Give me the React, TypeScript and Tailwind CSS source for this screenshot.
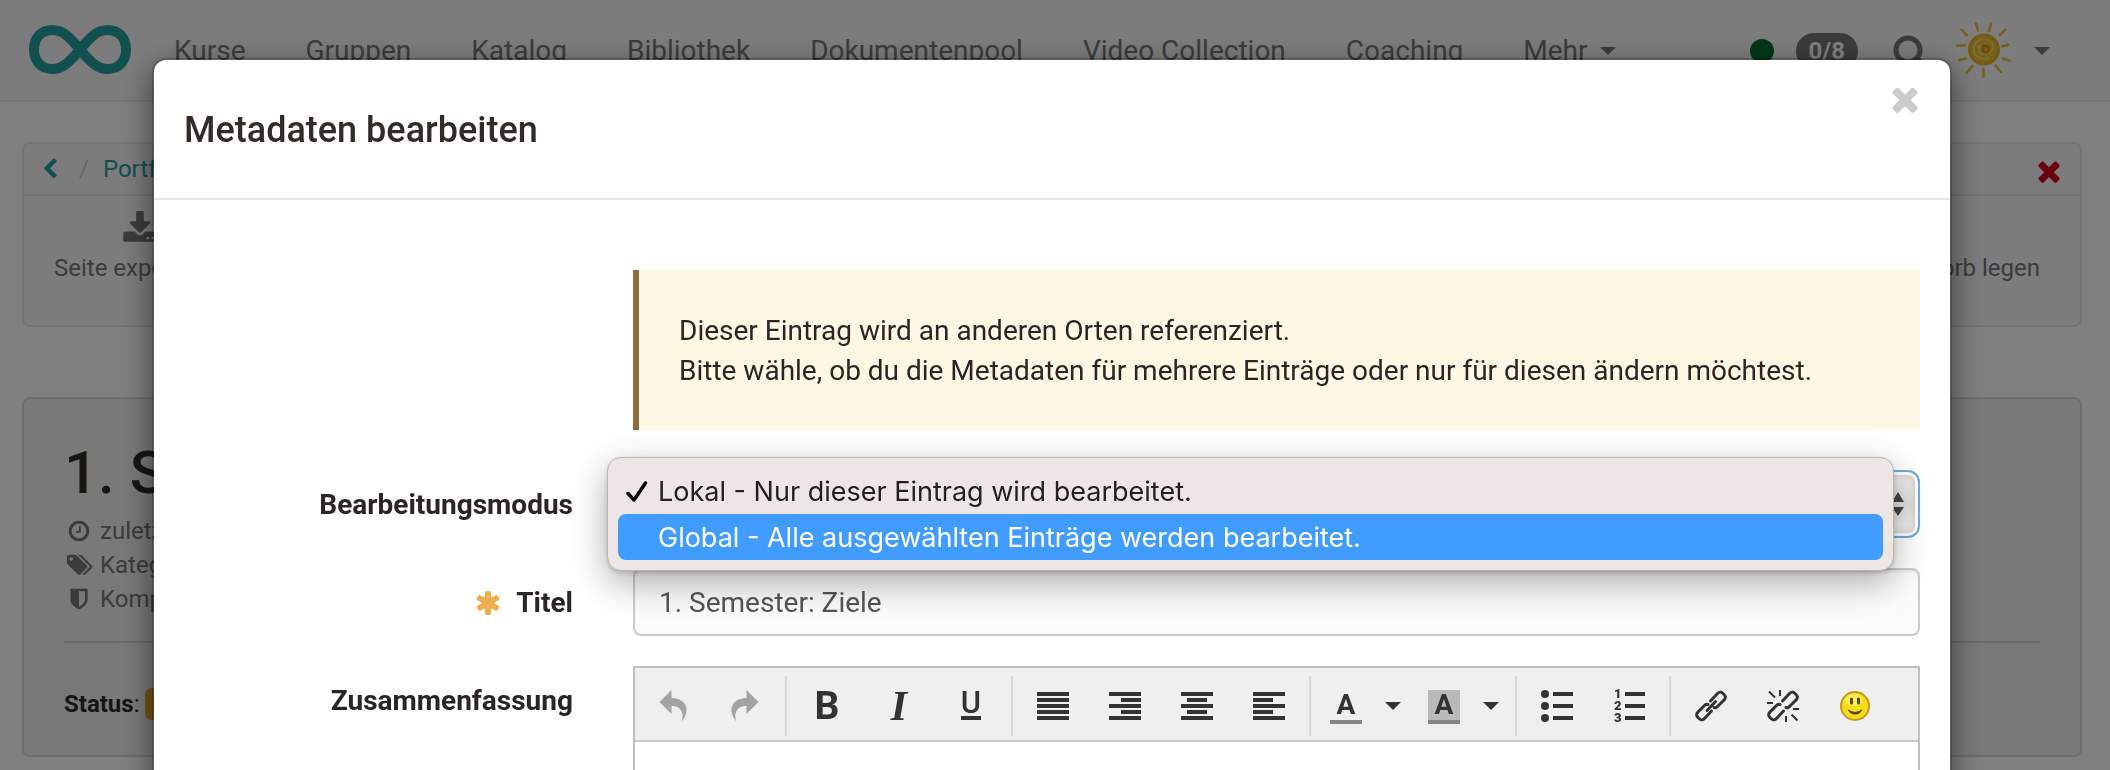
import React from "react";

const ICONS = {
  times:
    "M1490 1322q0 40-28 68l-136 136q-28 28-68 28t-68-28l-294-294-294 294q-28 28-68 28t-68-28l-136-136q-28-28-28-68t28-68l294-294-294-294q-28-28-28-68t28-68l136-136q28-28 68-28t68 28l294 294 294-294q28-28 68-28t68 28l136 136q28 28 28 68t-28 68l-294 294 294 294q28 28 28 68z",
  chevronLeft:
    "M1427 301l-531 531 531 531q19 19 19 45t-19 45l-166 166q-19 19-45 19t-45-19l-742-742q-19-19-19-45t19-45l742-742q19-19 45-19t45 19l166 166q19 19 19 45t-19 45z",
  clock:
    "M1024 544v448q0 14-9 23t-23 9h-320q-14 0-23-9t-9-23v-64q0-14 9-23t23-9h224v-352q0-14 9-23t23-9h64q14 0 23 9t9 23zm416 352q0-148-73-273t-198-198-273-73-273 73-198 198-73 273 73 273 198 198 273 73 273-73 198-198 73-273zm224 0q0 209-103 385.5t-279.5 279.5-385.5 103-385.5-103-279.5-279.5-103-385.5 103-385.5 279.5-279.5 385.5-103 385.5 103 279.5 279.5 103 385.5z",
  download:
    "M1344 1344q0-26-19-45t-45-19-45 19-19 45 19 45 45 19 45-19 19-45zm256 0q0-26-19-45t-45-19-45 19-19 45 19 45 45 19 45-19 19-45zm128-224v320q0 40-28 68t-68 28h-1472q-40 0-68-28t-28-68v-320q0-40 28-68t68-28h465l135 136q58 56 136 56t136-56l136-136h464q40 0 68 28t28 68zm-325-569q17 41-14 70l-448 448q-18 19-45 19t-45-19l-448-448q-31-29-14-70 17-39 59-39h256v-448q0-26 19-45t45-19h256q26 0 45 19t19 45v448h256q42 0 59 39z",
  tags:
    "M448 448q0-53-37.5-90.5t-90.5-37.5-90.5 37.5-37.5 90.5 37.5 90.5 90.5 37.5 90.5-37.5 37.5-90.5zm1067 576q0 53-37 90l-491 492q-39 37-91 37-53 0-90-37l-715-716q-38-37-64.5-101t-26.5-117v-416q0-52 38-90t90-38h416q53 0 117 26.5t102 64.5l715 714q37 39 37 91zm384 0q0 53-37 90l-491 492q-39 37-91 37-36 0-59-14t-53-45l470-470q37-37 37-90 0-52-37-91l-715-714q-38-38-102-64.5t-117-26.5h224q53 0 117 26.5t102 64.5l715 714q37 39 37 91z",
  shield:
    "M1344 960v-640h-448v1137q119-63 213-137 235-184 235-360zm192-768v768q0 86-33.5 170.5t-83 150-118 127.5-126.5 103-121 77.5-89.5 49.5-42.5 20q-12 6-26 6t-26-6q-16-7-42.5-20t-89.5-49.5-121-77.5-126.5-103-118-127.5-83-150-33.5-170.5v-768q0-26 19-45t45-19h1152q26 0 45 19t19 45z",
  asterisk:
    "M1546 1050q46 26 59.5 77.5t-12.5 97.5l-64 110q-26 46-77.5 59.5t-97.5-12.5l-266-153v307q0 52-38 90t-90 38h-128q-52 0-90-38t-38-90v-307l-266 153q-46 26-97.5 12.5t-77.5-59.5l-64-110q-26-46-12.5-97.5t59.5-77.5l266-154-266-154q-46-26-59.5-77.5t12.5-97.5l64-110q26-46 77.5-59.5t97.5 12.5l266 153v-307q0-52 38-90t90-38h128q52 0 90 38t38 90v307l266-153q46-26 97.5-12.5t77.5 59.5l64 110q26 46 12.5 97.5t-59.5 77.5l-266 154z",
};

function Icon({ name, className }: { name: keyof typeof ICONS; className: string }) {
  return (
    <svg viewBox="0 0 1792 1792" className={`shrink-0 overflow-visible fill-current ${className}`} aria-hidden="true">
      <path d={ICONS[name]} />
    </svg>
  );
}

function Caret() {
  return (
    <svg viewBox="0 0 16 8" className="h-2 w-4 shrink-0 fill-current" aria-hidden="true">
      <path d="M0 0h16l-8 8z" />
    </svg>
  );
}

function Logo() {
  return (
    <svg viewBox="0 0 102 49" className="mb-1 h-[49px] w-[102px] fill-none" aria-label="OpenOlat" role="img">
      <path
        d="M51 24.5C41 12.500 34 5 23.500 5C12 5 5 13 5 24.500S12 44 23.500 44C34 44 41 36.500 51 24.500S68 5 78.500 5C90 5 97 13 97 24.500S90 44 78.500 44C68 44 61 36.500 51 24.500Z"
        stroke="#249f9f"
        strokeWidth="10"
      />
    </svg>
  );
}

function Sun() {
  return (
    <svg viewBox="0 0 60 60" className="mb-[2px] h-[60px] w-[60px] fill-none" role="img" aria-label="Profil">
      <circle cx="30" cy="30" r="30" fill="#fff" fillOpacity="0.45" />
      <circle cx="30" cy="29.500" r="14.500" fill="#efc030" stroke="#e6b526" strokeWidth="3" />
      <path
        d="M34 27c-2-3-8-3-9 1s3 7 7 6 9-4 7-9-9-8-14-5-7 9-4 14 10 6 14 4"
        stroke="#f8dd80"
        strokeWidth="1.500"
        strokeLinecap="round"
      />
      <path d="M29 26c4-1 7 2 5 5s-6 1-5-2" stroke="#cf9a12" strokeWidth="3" strokeLinecap="round" />
      <path
        d="M22 3.500l2 7M37 3.500l-2 7.500M51 10l-5 5M54.500 24.500l-6 2M56 41l-7-2.500M47 52l-5.500-6.500M29.500 57v-8M12.500 53l6-7M5 40l7-1.500M3 25.500h8M7.500 9.500l5.500 6"
        stroke="#e6bf3c"
        strokeWidth="2.500"
        strokeLinecap="round"
      />
    </svg>
  );
}

function NavBar() {
  const items = ["Kurse", "Gruppen", "Katalog", "Bibliothek", "Dokumentenpool", "Video Collection", "Coaching"];
  return (
    <header className="flex h-[102px] items-center border-b-2 border-[#e7e7e7] bg-[#f8f8f8] pt-[2px] pr-[60px] pl-[29px] text-[28px] text-[#777]">
      <Logo />
      <nav className="ml-[43px] flex items-center gap-[60px] leading-10">
        {items.map((item) => (
          <a key={item} href="#" className="whitespace-nowrap">
            {item}
          </a>
        ))}
        <a href="#" className="flex items-center gap-3">
          Mehr <Caret />
        </a>
      </nav>
      <div className="ml-auto flex items-center">
        <span className="h-6 w-6 rounded-full bg-[#00702f]" />
        <span className="ml-[22px] flex h-9 items-center rounded-full bg-[#777] px-[13px] text-2xl font-bold text-white">
          0/8
        </span>
        <button type="button" aria-label="Suche" className="ml-[34px]">
          <svg viewBox="0 0 34 34" className="block h-[34px] w-[34px] fill-none stroke-current">
            <circle cx="16" cy="16" r="12" strokeWidth="5" />
            <path d="M25 25l6 6" strokeWidth="6" strokeLinecap="round" />
          </svg>
        </button>
        <button type="button" aria-label="Benutzermenü" className="ml-[28px] flex items-center gap-5">
          <Sun />
          <Caret />
        </button>
      </div>
    </header>
  );
}

function Page() {
  return (
    <div className="pr-[6px]">
      <section className="mx-[22px] mt-10 h-[185px] overflow-hidden rounded-lg border-2 border-[#e7e7e7] bg-[#f8f8f8] text-2xl text-[#777]">
        <div className="flex h-[52px] items-center border-b-2 border-[#e7e7e7] pr-[15px] pl-[15px]">
          <a href="#" aria-label="Zurück" className="text-[#249f9f]">
            <Icon name="chevronLeft" className="h-[22px] w-[22px]" />
          </a>
          <span className="ml-[18px] text-[#ccc]">/</span>
          <a href="#" className="ml-[14px] text-[#249f9f]">
            Portfolio
          </a>
          <button type="button" aria-label="Schliessen" className="mt-1 ml-auto text-[#d50021]">
            <Icon name="times" className="h-8 w-8" />
          </button>
        </div>
        <div className="flex justify-between pt-[15px] pr-10 pl-[30px]">
          <button type="button" className="flex flex-col items-center gap-[5px]">
            <span className="pr-2">
              <Icon name="download" className="h-9 w-9" />
            </span>
            <span>Seite exportieren</span>
          </button>
          <button type="button" className="flex flex-col items-center gap-[5px]">
            <Icon name="times" className="h-9 w-9" />
            <span>In den Papierkorb legen</span>
          </button>
        </div>
      </section>

      <section className="mx-[22px] mt-[70px] h-[360px] rounded-lg border-2 border-[#dadada] bg-[#f3f3f3] px-10 pt-10 text-2xl text-[#777]">
        <h1 className="text-[60px] leading-[68px] font-medium text-[#332b22]">1. Sem.</h1>
        <ul className="mt-[7px] leading-[34px]">
          <li className="flex items-center">
            <span className="flex w-9 justify-center pr-[6px]">
              <Icon name="clock" className="h-6 w-6" />
            </span>
            zuletzt geändert
          </li>
          <li className="flex items-center">
            <span className="flex w-9 justify-center pr-[6px]">
              <Icon name="tags" className="h-6 w-6" />
            </span>
            Kategorien
          </li>
          <li className="flex items-center">
            <span className="flex w-9 justify-center pr-[6px]">
              <Icon name="shield" className="h-6 w-6" />
            </span>
            Kompetenzen
          </li>
        </ul>
        <hr className="mt-[25px] border-t-2 border-[#d5d5d5]" />
        <p className="mt-[45px] flex items-center gap-[6px] text-[#2a2a2a]">
          <span>
            <b>Status</b>:
          </span>
          <span className="h-8 rounded-md bg-[#f0a830] px-3 text-white">Entwurf</span>
        </p>
      </section>
    </div>
  );
}

function Separator() {
  return <span className="mx-1 h-[60px] w-[2px] bg-[#d8d8d8]" />;
}

function ToolButton({ label, muted, children }: { label: string; muted?: boolean; children: React.ReactNode }) {
  return (
    <button
      type="button"
      aria-label={label}
      className={`flex h-[60px] w-[72px] items-center justify-center ${muted ? "text-[#a3a3a3]" : "text-[#333]"}`}
    >
      {children}
    </button>
  );
}

function Glyph({ children }: { children: React.ReactNode }) {
  return (
    <svg viewBox="0 0 32 32" className="h-8 w-8 overflow-visible fill-current" aria-hidden="true">
      {children}
    </svg>
  );
}

function AlignGlyph({ x, w }: { x: number; w: number }) {
  return (
    <Glyph>
      <path d={`M0 2h32v4h-32zM${x} 8h${w}v4h-${w}zM0 14h32v4h-32zM${x} 20h${w}v4h-${w}zM0 26h32v4h-32z`} />
    </Glyph>
  );
}

function ColorButton({ label, filled }: { label: string; filled?: boolean }) {
  return (
    <button
      type="button"
      aria-label={label}
      className="flex h-[60px] w-[98px] items-center justify-between pr-3 pl-[15px] text-[#333]"
    >
      <span
        className={`mt-[2px] flex h-[34px] w-8 items-end justify-center border-b-4 border-[#848484] text-[28px] leading-[31px] font-bold ${
          filled ? "bg-[#bababa]" : ""
        }`}
      >
        A
      </span>
      <Caret />
    </button>
  );
}

const UNDO = "M2.500 12L14.500 0V8C24 8 29.500 13 29.500 20C29.500 25 27 29 24.500 31.500C26.500 27 27 16 14.500 16V24Z";
const HALF_LINKS = (
  <g fill="none" stroke="currentColor" strokeWidth="3" strokeLinecap="round" strokeLinejoin="round">
    <path d="M15.500 11L22 4Q25 0.500 28 3.500L29 4.500Q32 7.500 28.500 10.500L22 17Q20.500 18 19 17.500" />
    <path d="M16.500 21L10 28Q7 31.500 4 28.500L3 27.500Q0 24.500 3.500 21.500L10 15Q11.500 14 13 14.500" />
  </g>
);

function Toolbar() {
  return (
    <div className="flex h-[74px] items-center border-b-2 border-[#c8c8c8] bg-[#efefef] px-[2px] pt-1">
      <ToolButton label="Rückgängig" muted>
        <Glyph>
          <path d={UNDO} />
        </Glyph>
      </ToolButton>
      <ToolButton label="Wiederherstellen" muted>
        <Glyph>
          <g transform="matrix(-1 0 0 1 32 0)">
            <path d={UNDO} />
          </g>
        </Glyph>
      </ToolButton>
      <Separator />
      <ToolButton label="Fett">
        <span className="text-[39px] leading-8 font-bold">B</span>
      </ToolButton>
      <ToolButton label="Kursiv">
        <span className="font-['Liberation_Serif',serif] text-[42px] leading-8 font-bold italic">I</span>
      </ToolButton>
      <ToolButton label="Unterstrichen">
        <span className="flex h-7 w-5 justify-center border-b-4 border-[#333] text-[31px] leading-[22px] font-medium">
          U
        </span>
      </ToolButton>
      <Separator />
      <ToolButton label="Blocksatz">
        <AlignGlyph x={0} w={32} />
      </ToolButton>
      <ToolButton label="Rechtsbündig">
        <AlignGlyph x={12} w={20} />
      </ToolButton>
      <ToolButton label="Zentriert">
        <AlignGlyph x={6} w={20} />
      </ToolButton>
      <ToolButton label="Linksbündig">
        <AlignGlyph x={0} w={20} />
      </ToolButton>
      <Separator />
      <ColorButton label="Textfarbe" />
      <ColorButton label="Hintergrundfarbe" filled />
      <Separator />
      <ToolButton label="Liste">
        <Glyph>
          <circle cx="4" cy="4" r="4" />
          <circle cx="4" cy="16" r="4" />
          <circle cx="4" cy="28" r="4" />
          <path d="M12 2h20v4h-20zM12 14h20v4h-20zM12 26h20v4h-20z" />
        </Glyph>
      </ToolButton>
      <ToolButton label="Nummerierte Liste">
        <Glyph>
          <path d="M12 2h20v4h-20zM12 14h20v4h-20zM12 26h20v4h-20z" />
          <g fontSize="13" fontWeight="900">
            <text x="1" y="8">1</text>
            <text x="1" y="20">2</text>
            <text x="1" y="32">3</text>
          </g>
        </Glyph>
      </ToolButton>
      <Separator />
      <ToolButton label="Link einfügen">
        <Glyph>
          {HALF_LINKS}
          <path d="M12 20.500L20.500 11.500" stroke="currentColor" strokeWidth="3" strokeLinecap="round" />
        </Glyph>
      </ToolButton>
      <ToolButton label="Link entfernen">
        <Glyph>
          {HALF_LINKS}
          <path d="M2 1.500l6 6M13 0v6M0 13h6M26 19h6M19 26v6M24.500 24.500l6 6" stroke="currentColor" strokeWidth="2" />
        </Glyph>
      </ToolButton>
      <ToolButton label="Smiley">
        <svg viewBox="0 0 32 32" className="h-8 w-8" aria-hidden="true">
          <circle cx="16" cy="16" r="14" fill="#f6dc1c" stroke="#c39a1e" strokeWidth="2" />
          <ellipse cx="15" cy="10" rx="9" ry="6" fill="#fff36b" fillOpacity="0.7" />
          <path d="M12.500 9v4M19.500 9v4" stroke="#5c4a00" strokeWidth="3" strokeLinecap="round" />
          <path d="M8.500 19q7.500 6 15 0q-2 5.500-7.500 5.500t-7.500-5.500z" fill="#5c4a00" />
        </svg>
      </ToolButton>
    </div>
  );
}

function ModeSelect() {
  return (
    <div className="relative">
      <select
        id="mode"
        defaultValue="local"
        className="h-[68px] w-full appearance-none rounded-xl border-2 border-[#66afe9] bg-linear-to-b from-[#f2f2f2] via-[#e2e2e2] to-[#f7f7f7] px-6 text-[28px] text-[#555] shadow-[inset_0_0_0_3px_#fff,inset_0_0_8px_2px_#bbb] outline-none"
      >
        <option value="local">Lokal - Nur dieser Eintrag wird bearbeitet.</option>
        <option value="global">Global - Alle ausgewählten Einträge werden bearbeitet.</option>
      </select>
      <svg
        viewBox="0 0 12 24"
        className="pointer-events-none absolute top-[22px] right-4 h-6 w-3 fill-[#444]"
        aria-hidden="true"
      >
        <path d="M0 10L6 0l6 10zM0 15L6 24l6-9z" />
      </svg>
      <div
        role="listbox"
        aria-label="Bearbeitungsmodus"
        className="absolute top-[-13px] left-[-26px] z-10 w-full rounded-[14px] border border-[#b9b3b3] bg-[#eee6e4] px-[10px] py-[10px] font-[Inter,sans-serif] text-[27px] leading-[44px] text-[#222] shadow-[0_12px_36px_rgba(0,0,0,0.32),0_2px_4px_rgba(0,0,0,0.15)]"
      >
        <div role="option" aria-selected="true" className="flex items-center pt-[2px] pl-2">
          <svg viewBox="0 0 22 22" className="mr-[10px] h-[22px] w-[22px] fill-none stroke-black" aria-hidden="true">
            <path d="M2 12.500L8 19L19.500 2" strokeWidth="3.500" strokeLinecap="round" strokeLinejoin="round" />
          </svg>
          Lokal - Nur dieser Eintrag wird bearbeitet.
        </div>
        <div role="option" aria-selected="false" className="rounded-lg bg-[#419cff] pt-[2px] pl-10 text-white">
          Global - Alle ausgewählten Einträge werden bearbeitet.
        </div>
      </div>
    </div>
  );
}

function Modal() {
  return (
    <div className="fixed inset-0 overflow-hidden bg-black/50 pt-[58px] pr-[6px]">
      <div
        role="dialog"
        aria-labelledby="dialog-title"
        className="mx-auto min-h-full w-full max-w-[1800px] rounded-[14px] border-2 border-black/20 bg-white bg-clip-padding shadow-[0_10px_30px_rgba(0,0,0,0.5)]"
      >
        <div className="flex h-[140px] items-start justify-between border-b-2 border-[#e5e5e5] pr-[26px] pl-[30px]">
          <h2 id="dialog-title" className="pt-[50px] text-4xl leading-10 font-medium text-[#332b25]">
            Metadaten bearbeiten
          </h2>
          <button type="button" aria-label="Schliessen" className="pt-[20px] text-[#ccc]">
            <Icon name="times" className="h-[38px] w-[38px]" />
          </button>
        </div>
        <form className="grid grid-cols-12 gap-y-[30px] pt-[70px] text-[28px] leading-10 text-[#2b2626]">
          <div className="col-span-9 col-start-4 mb-[10px] px-[30px]">
            <div className="border-l-[6px] border-[#8a6d3b] bg-[#fdf7e3] px-10 pt-[41px] pb-[39px]">
              <p>Dieser Eintrag wird an anderen Orten referenziert.</p>
              <p>Bitte wähle, ob du die Metadaten für mehrere Einträge oder nur für diesen ändern möchtest.</p>
            </div>
          </div>
          <label htmlFor="mode" className="col-span-3 pt-[15px] pr-[30px] text-right font-bold">
            Bearbeitungsmodus
          </label>
          <div className="col-span-9 px-[30px]">
            <ModeSelect />
          </div>
          <label htmlFor="title" className="col-span-3 flex justify-end gap-[14px] pt-[15px] pr-[30px] font-bold">
            <Icon name="asterisk" className="mt-[6px] h-7 w-7 text-[#f0ad4e]" />
            Titel
          </label>
          <div className="col-span-9 px-[30px]">
            <input
              id="title"
              type="text"
              defaultValue="1. Semester: Ziele"
              className="block h-[68px] w-full rounded-lg border-2 border-[#ccc] bg-[#fcfcfc] px-6 text-[#555] shadow-[inset_0_2px_2px_rgba(0,0,0,0.075)]"
            />
          </div>
          <label htmlFor="summary" className="col-span-3 pt-[15px] pr-[30px] text-right font-bold">
            Zusammenfassung
          </label>
          <div className="col-span-9 px-[30px]">
            <div className="border-2 border-[#bfbfbf]">
              <Toolbar />
              <textarea id="summary" className="block h-[300px] w-full resize-none bg-white p-6 outline-none" />
            </div>
          </div>
        </form>
      </div>
    </div>
  );
}

export default function App() {
  return (
    <div className="h-screen overflow-hidden bg-white font-[Roboto,sans-serif]">
      <NavBar />
      <Page />
      <Modal />
    </div>
  );
}
